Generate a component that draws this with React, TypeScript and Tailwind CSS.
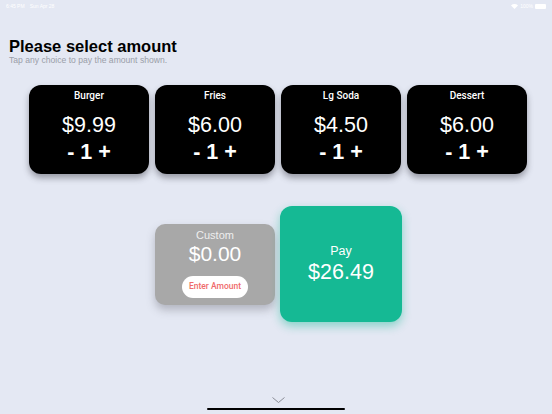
import React from 'react';

interface Item {
  name: string;
  price: string;
  qty: number;
}

const items: Item[] = [
  { name: 'Burger', price: '$9.99', qty: 1 },
  { name: 'Fries', price: '$6.00', qty: 1 },
  { name: 'Lg Soda', price: '$4.50', qty: 1 },
  { name: 'Dessert', price: '$6.00', qty: 1 },
];

const StatusBar: React.FC = () => (
  <div className="h-[12px] px-[6px] flex items-center justify-between text-white text-[5px] leading-none">
    <div className="flex items-center gap-[5px]">
      <span>6:45 PM</span>
      <span>Sun Apr 28</span>
    </div>
    <div className="flex items-center gap-[2px]">
      <svg width="7" height="5" viewBox="0 0 14 10" fill="white">
        <path d="M7 10 L0 3 A10 10 0 0 1 14 3 Z" />
      </svg>
      <span>100%</span>
      <div className="w-[11px] h-[5px] bg-white rounded-[1px]" />
    </div>
  </div>
);

const ItemCard: React.FC<{ item: Item }> = ({ item }) => (
  <div className="w-[120px] h-[89px] bg-black rounded-[12px] shadow-[0_4px_6px_rgba(60,60,70,0.45)] flex flex-col items-center text-white">
    <div className="mt-[5px] text-[10px] font-medium leading-[12px] font-['Roboto',sans-serif]">{item.name}</div>
    <div className="mt-[11px] text-[21.5px] leading-[24px]">{item.price}</div>
    <div className="mt-[3px] text-[21.5px] font-bold leading-[24px]">- {item.qty} +</div>
  </div>
);

export default function App() {
  return (
    <div
      className="w-[552px] h-[414px] bg-[#e4e8f3] flex flex-col overflow-hidden"
      style={{ fontFamily: '"Liberation Sans", Arial, sans-serif' }}
    >
      <StatusBar />

      <div className="mt-[25px] pl-[9px]">
        <h1 className="text-[16.5px] font-bold leading-[18px] text-black">Please select amount</h1>
        <p className="text-[8.6px] leading-[10px] text-[#9a9ea8]">Tap any choice to pay the amount shown.</p>
      </div>

      <div className="mt-[20px] pl-[4px] flex justify-center gap-[6px]">
        {items.map((it) => (
          <ItemCard key={it.name} item={it} />
        ))}
      </div>

      <div className="mt-[32px] pl-[5px] flex justify-center items-center gap-[5px]">
        <div className="w-[120px] h-[81px] bg-[#a8a8a8] rounded-[10px] shadow-[0_5px_8px_rgba(90,90,100,0.35)] flex flex-col items-center text-white">
          <div className="mt-[5px] text-[11px] leading-[13px] text-[#eeeeee]">Custom</div>
          <div className="text-[21px] leading-[24px]">$0.00</div>
          <button className="mt-[10px] w-[66px] h-[22px] rounded-full bg-white text-[#ef6b6b] text-[8.5px] font-medium font-['Roboto',sans-serif]">
            Enter Amount
          </button>
        </div>
        <div className="w-[122px] h-[116px] bg-[#15b994] rounded-[12px] shadow-[0_4px_10px_rgba(21,185,148,0.45)] flex flex-col items-center justify-center text-white">
          <div className="text-[12.5px] leading-[15px]">Pay</div>
          <div className="mt-[1px] text-[21.5px] leading-[25px]">$26.49</div>
        </div>
      </div>

      <div className="flex-1" />

      <div className="flex flex-col items-center pb-[4px]">
        <svg className="ml-[4px]" width="13" height="6" viewBox="0 0 13 6" fill="none" stroke="#8a8e96" strokeWidth="1">
          <path d="M0.5 0.5 L6.5 5.5 L12.5 0.5" />
        </svg>
        <div className="mt-[5px] w-[138px] h-[2px] bg-black rounded-full" />
      </div>
    </div>
  );
}
